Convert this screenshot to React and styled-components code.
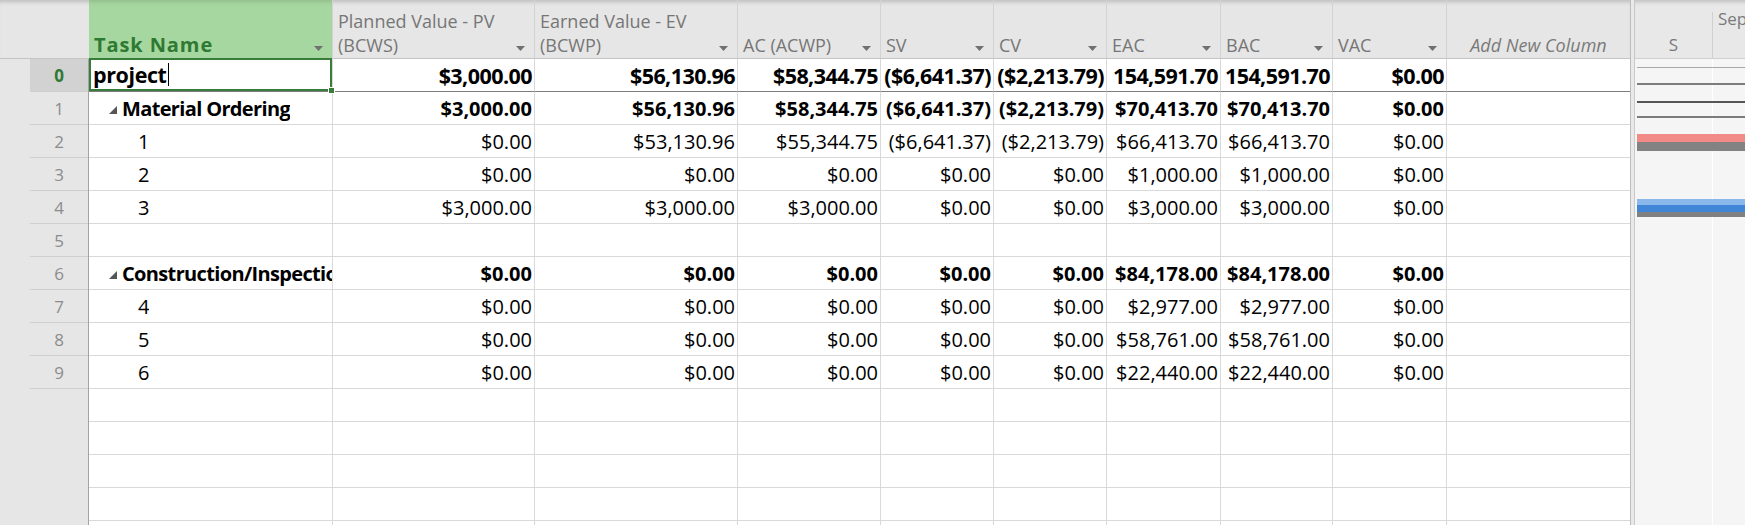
import React from "react";
import styled, { createGlobalStyle } from "styled-components";

const GlobalStyle = createGlobalStyle`
  html, body {
    margin: 0;
    padding: 0;
    background: #fff;
  }
  body {
    font-family: "Open Sans", "Noto Sans", sans-serif;
    overflow: hidden;
  }
`;

const COLS = "89px 244px 202px 203px 143px 113px 113px 114px 112px 114px 183px";

const columns = [
  { key: "pv", title: ["Planned Value - PV", "(BCWS)"] },
  { key: "ev", title: ["Earned Value - EV", "(BCWP)"] },
  { key: "ac", title: ["AC (ACWP)"] },
  { key: "sv", title: ["SV"] },
  { key: "cv", title: ["CV"] },
  { key: "eac", title: ["EAC"] },
  { key: "bac", title: ["BAC"] },
  { key: "vac", title: ["VAC"] },
];

const zeros = ["$0.00", "$0.00", "$0.00", "$0.00", "$0.00"];

const rows = [
  { id: 0, name: "project", kind: "project", values: ["$3,000.00", "$56,130.96", "$58,344.75", "($6,641.37)", "($2,213.79)", "154,591.70", "154,591.70", "$0.00"] },
  { id: 1, name: "Material Ordering", kind: "summary", values: ["$3,000.00", "$56,130.96", "$58,344.75", "($6,641.37)", "($2,213.79)", "$70,413.70", "$70,413.70", "$0.00"] },
  { id: 2, name: "1", kind: "task", values: ["$0.00", "$53,130.96", "$55,344.75", "($6,641.37)", "($2,213.79)", "$66,413.70", "$66,413.70", "$0.00"] },
  { id: 3, name: "2", kind: "task", values: [...zeros, "$1,000.00", "$1,000.00", "$0.00"] },
  { id: 4, name: "3", kind: "task", values: ["$3,000.00", "$3,000.00", "$3,000.00", "$0.00", "$0.00", "$3,000.00", "$3,000.00", "$0.00"] },
  { id: 5, name: "", kind: "task", values: [] },
  { id: 6, name: "Construction/Inspection", kind: "summary", values: [...zeros, "$84,178.00", "$84,178.00", "$0.00"] },
  { id: 7, name: "4", kind: "task", values: [...zeros, "$2,977.00", "$2,977.00", "$0.00"] },
  { id: 8, name: "5", kind: "task", values: [...zeros, "$58,761.00", "$58,761.00", "$0.00"] },
  { id: 9, name: "6", kind: "task", values: [...zeros, "$22,440.00", "$22,440.00", "$0.00"] },
];

const EMPTY_ROWS = 5;

export default function App() {
  return (
    <>
      <GlobalStyle />
      <Screen>
        <Sheet>
          <HeaderRow>
            <Corner />
            <HeaderCell $active>
              <HeaderTitle $active>
                <span>Task Name</span>
              </HeaderTitle>
              <DropArrow />
            </HeaderCell>
            {columns.map((c) => (
              <HeaderCell key={c.key}>
                <HeaderTitle>
                  {c.title.map((t) => (
                    <span key={t}>{t}</span>
                  ))}
                </HeaderTitle>
                <DropArrow />
              </HeaderCell>
            ))}
            <AddColumn>Add New Column</AddColumn>
          </HeaderRow>

          {rows.map((r) => (
            <BodyRow key={r.id}>
              <RowNumber $selected={r.id === 0}>
                <span>{r.id}</span>
              </RowNumber>
              <NameCell $kind={r.kind} $selected={r.id === 0}>
                {r.kind === "summary" && <Collapse />}
                <span>{r.name}</span>
                {r.id === 0 && <Caret />}
              </NameCell>
              {columns.map((c, i) => (
                <ValueCell key={c.key} $kind={r.kind}>
                  {r.values[i] || ""}
                </ValueCell>
              ))}
              <BlankCell $kind={r.kind} />
            </BodyRow>
          ))}

          {Array.from({ length: EMPTY_ROWS }).map((_, i) => (
            <BodyRow key={`e${i}`}>
              <RowNumber />
              <NameCell />
              {columns.map((c) => (
                <ValueCell key={c.key} />
              ))}
              <BlankCell />
            </BodyRow>
          ))}
        </Sheet>

        <Splitter />

        <Gantt>
          <GanttHeader>
            <DayTier>S</DayTier>
            <MonthTier>Sep</MonthTier>
          </GanttHeader>
          <GanttChart />
        </Gantt>
      </Screen>
    </>
  );
}

function DropArrow() {
  return (
    <Arrow width="9" height="5" viewBox="0 0 9 5">
      <polygon points="0,0 9,0 4.5,5" fill="#707070" />
    </Arrow>
  );
}

function Collapse() {
  return (
    <Triangle width="8" height="8" viewBox="0 0 8 8">
      <polygon points="8,0 8,8 0,8" fill="#555555" />
    </Triangle>
  );
}

function GanttChart() {
  return (
    <ChartSvg width="110" height="466" viewBox="0 0 110 466">
      <rect x="77" y="0" width="1" height="466" fill="#ffffff" />
      <rect x="2" y="8" width="108" height="1" fill="#a8a8a8" />
      <rect x="2" y="24" width="108" height="2" fill="#7c7c7c" />
      <rect x="2" y="42" width="108" height="2" fill="#555555" />
      <rect x="2" y="57" width="108" height="2" fill="#7c7c7c" />
      <rect x="2" y="75" width="108" height="8" fill="#f28a87" />
      <rect x="2" y="83" width="108" height="9" fill="#828282" />
      <rect x="2" y="140" width="108" height="6" fill="#8ab8ea" />
      <rect x="2" y="146" width="108" height="7" fill="#3f86d6" />
      <rect x="2" y="153" width="108" height="5" fill="#808080" />
    </ChartSvg>
  );
}

const Screen = styled.div`
  display: flex;
  width: 1745px;
  height: 525px;
  overflow: hidden;
`;

const Sheet = styled.div`
  width: 1630px;
  flex: none;
  display: flex;
  flex-direction: column;
`;

const HeaderRow = styled.div`
  display: grid;
  grid-template-columns: ${COLS};
  height: 59px;
  flex: none;
  background: #e6e6e6;
  box-shadow: inset 0 5px 4px -3px rgba(0, 0, 0, 0.18);
  border-bottom: 1px solid #c4c4c4;
  box-sizing: border-box;
`;

const Corner = styled.div`
  background: transparent;
`;

const HeaderCell = styled.div`
  display: flex;
  align-items: flex-end;
  padding: 0 9px 1px 5px;
  border-right: 1px solid #d3d3d3;
  background: ${(p) => (p.$active ? "#a6d7a0" : "transparent")};
  box-shadow: ${(p) => (p.$active ? "inset 0 5px 4px -3px rgba(0,0,0,0.12)" : "none")};
  overflow: hidden;
`;

const HeaderTitle = styled.div`
  flex: 1;
  min-width: 0;
  display: flex;
  flex-direction: column;
  font-size: ${(p) => (p.$active ? "20px" : "18px")};
  font-weight: ${(p) => (p.$active ? 700 : 400)};
  letter-spacing: ${(p) => (p.$active ? "0.9px" : "0")};
  line-height: 24px;
  color: ${(p) => (p.$active ? "#2f7a32" : "#767676")};
  white-space: nowrap;
`;

const Arrow = styled.svg`
  flex: none;
  margin: 0 0 6px 2px;
`;

const AddColumn = styled.div`
  display: flex;
  align-items: flex-end;
  justify-content: center;
  padding-bottom: 1px;
  line-height: 24px;
  font-size: 18px;
  font-style: italic;
  color: #7a7a7a;
`;

const BodyRow = styled.div`
  display: grid;
  grid-template-columns: ${COLS};
  height: 33px;
  flex: none;
`;

const RowNumber = styled.div`
  background: #e6e6e6;
  border-right: 1px solid #a3a3a3;
  padding-left: 30px;

  span {
    display: flex;
    height: 100%;
    box-sizing: border-box;
    align-items: center;
    justify-content: center;
    border-bottom: 1px solid #cfcfcf;
    background: ${(p) => (p.$selected ? "#d2d2d2" : "transparent")};
    color: ${(p) => (p.$selected ? "#2f7a32" : "#8c8c8c")};
    font-weight: ${(p) => (p.$selected ? 700 : 400)};
    font-size: 17px;
  }
`;

const Cell = styled.div`
  box-sizing: border-box;
  display: flex;
  align-items: center;
  border-right: 1px solid #d9d9d9;
  border-bottom: 1px solid
    ${(p) => (p.$kind === "project" ? "#7d7d7d" : "#d9d9d9")};
  white-space: nowrap;
  overflow: hidden;
  color: #000;
  font-size: ${(p) => (p.$kind === "project" ? "21.5px" : "20px")};
  font-weight: ${(p) => (p.$kind === "project" || p.$kind === "summary" ? 700 : 400)};
  letter-spacing: ${(p) => (p.$kind === "project" ? "-0.55px" : "0")};
`;

const NameCell = styled(Cell)`
  position: relative;
  overflow: visible;
  padding-left: ${(p) =>
    p.$kind === "project" ? "4px" : p.$kind === "summary" ? "20px" : "49px"};
  letter-spacing: ${(p) =>
    p.$kind === "project" ? "-0.4px" : p.$kind === "summary" ? "-0.65px" : "0"};
  box-shadow: ${(p) => (p.$selected ? "inset 0 0 0 2px #3a7d3a" : "none")};
  margin-top: ${(p) => (p.$selected ? "-1px" : "0")};
  height: ${(p) => (p.$selected ? "34px" : "auto")};

  span {
    overflow: hidden;
  }

  ${(p) =>
    p.$selected &&
    `
    &::after {
      content: "";
      position: absolute;
      right: -3px;
      bottom: -3px;
      width: 5px;
      height: 5px;
      background: #3a7d3a;
      border: 1px solid #fff;
      z-index: 2;
    }
  `}
`;

const Caret = styled.i`
  display: inline-block;
  width: 1px;
  height: 23px;
  background: #000;
  margin-left: 1px;
`;

const Triangle = styled.svg`
  flex: none;
  margin-right: 5px;
  margin-top: 3px;
`;

const ValueCell = styled(Cell)`
  justify-content: flex-end;
  padding-right: 2px;
`;

const BlankCell = styled(Cell)`
  border-right: none;
`;

const Splitter = styled.div`
  width: 5px;
  flex: none;
  box-sizing: border-box;
  background: #e9e9e9;
  border-left: 1px solid #bcbcbc;
  border-right: 1px solid #c9c9c9;
`;

const Gantt = styled.div`
  flex: 1;
  display: flex;
  flex-direction: column;
  background: #f5f5f5;
`;

const GanttHeader = styled.div`
  height: 59px;
  flex: none;
  box-sizing: border-box;
  display: grid;
  grid-template-columns: 78px 1fr;
  background: #e8e8e8;
  box-shadow: inset 0 5px 4px -3px rgba(0, 0, 0, 0.18);
  border-bottom: 1px solid #d0d0d0;
  font-size: 17px;
  color: #7a7a7a;
`;

const DayTier = styled.div`
  display: flex;
  align-items: flex-end;
  justify-content: center;
  padding-bottom: 1px;
  line-height: 24px;
  border-right: 1px solid #d0d0d0;
  margin-top: 12px;
`;

const MonthTier = styled.div`
  padding: 7px 0 0 5px;
  line-height: 24px;
`;

const ChartSvg = styled.svg`
  display: block;
`;
